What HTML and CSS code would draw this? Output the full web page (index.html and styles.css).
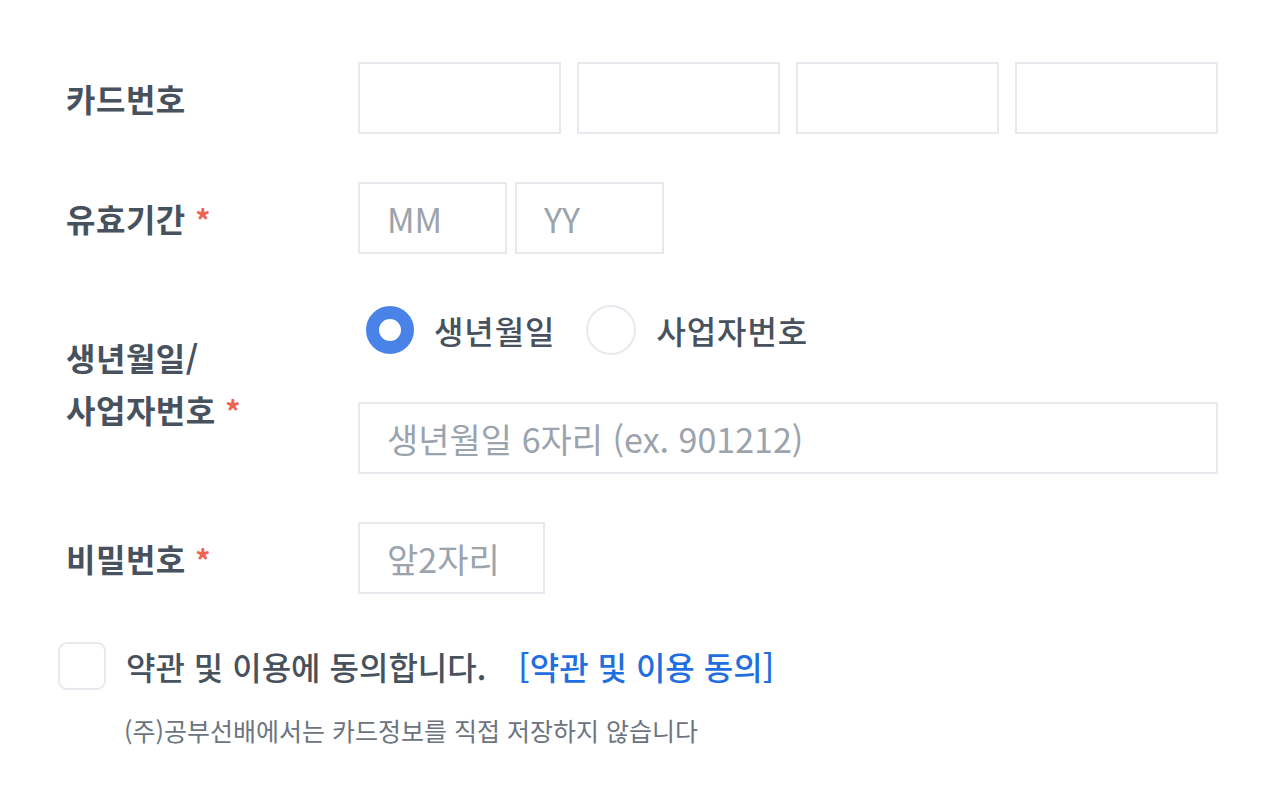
FILE: index.html
```html
<!DOCTYPE html>
<html lang="ko">
<head>
<meta charset="utf-8">
<title>카드 결제</title>
<link rel="stylesheet" href="styles.css">
</head>
<body>
<form class="form">
  <div class="row">
    <div class="label">카드번호</div>
    <div class="field card-fields">
      <input class="box" type="text">
      <input class="box" type="text">
      <input class="box" type="text">
      <input class="box" type="text">
    </div>
  </div>

  <div class="row">
    <div class="label">유효기간 <span class="req">*</span></div>
    <div class="field exp-fields">
      <input class="box exp" type="text" placeholder="MM">
      <input class="box exp" type="text" placeholder="YY">
    </div>
  </div>

  <div class="row row-id">
    <div class="label label-two">생년월일/<br>사업자번호 <span class="req">*</span></div>
    <div class="field id-fields">
      <div class="radios">
        <label class="radio"><span class="dot on"></span>생년월일</label>
        <label class="radio"><span class="dot"></span>사업자번호</label>
      </div>
      <input class="box wide" type="text" placeholder="생년월일 6자리 (ex. 901212)">
    </div>
  </div>

  <div class="row">
    <div class="label">비밀번호 <span class="req">*</span></div>
    <div class="field">
      <input class="box pw" type="text" placeholder="앞2자리">
    </div>
  </div>

  <div class="agree">
    <span class="check"></span>
    <span class="agree-text">약관 및 이용에 동의합니다.</span>
    <a class="terms" href="#">[약관 및 이용 동의]</a>
  </div>
  <p class="note">(주)공부선배에서는 카드정보를 직접 저장하지 않습니다</p>
</form>
</body>
</html>
```

FILE: styles.css
```css
* { box-sizing: border-box; }
html, body {
  margin: 0;
  padding: 0;
  background: #ffffff;
}
body {
  font-family: "Noto Sans CJK KR", "Noto Sans", sans-serif;
  color: #47525e;
}
.form {
  width: 1160px;
  margin: 0 0 0 58px;
  padding-top: 62px;
  display: flex;
  flex-direction: column;
}
.row {
  display: grid;
  grid-template-columns: 300px 1fr;
  align-items: center;
  margin-bottom: 48px;
}
.row-id {
  margin-top: 4px;
}
.label {
  padding-left: 8px;
  font-size: 32px;
  font-weight: 700;
  letter-spacing: 0.5px;
  line-height: 52px;
  color: #47525e;
}
.label-two {
  margin-bottom: 14px;
}
.req {
  color: #ef6351;
  font-size: 30px;
  font-weight: 700;
  margin-left: 0;
}
.field {
  display: flex;
}
.card-fields {
  gap: 16px;
}
.exp-fields {
  gap: 8px;
}
.box {
  height: 72px;
  border: 2px solid #e6e9ee;
  background: #fff;
  padding: 0 27px;
  font-family: "Noto Sans CJK KR", "Noto Sans", sans-serif;
  font-size: 34px;
  letter-spacing: 0;
  color: #47525e;
  outline: none;
  border-radius: 0;
  margin: 0;
}
.box::placeholder {
  color: #9ba3ad;
}
.card-fields .box {
  width: 203px;
}
.box.exp {
  width: 149px;
}
.box.wide {
  width: 860px;
}
.box.pw {
  width: 187px;
}
.id-fields {
  flex-direction: column;
  gap: 48px;
}
.radios {
  display: flex;
  align-items: center;
  height: 48px;
  padding-left: 8px;
  gap: 31px;
}
.radio {
  display: flex;
  align-items: center;
  gap: 20px;
  font-size: 32px;
  font-weight: 500;
  letter-spacing: 0.9px;
  color: #47525e;
}
.dot {
  width: 50px;
  height: 50px;
  border-radius: 50%;
  border: 2px solid #e6e9ee;
  background: #fff;
}
.dot.on {
  width: 48px;
  height: 48px;
  border: 13px solid #4a83e8;
}
.agree {
  display: flex;
  align-items: center;
  height: 48px;
}
.check {
  width: 48px;
  height: 48px;
  border: 2px solid #e6e9ee;
  border-radius: 9px;
  margin-right: 20px;
  flex-shrink: 0;
}
.agree-text {
  font-size: 32px;
  font-weight: 500;
  letter-spacing: 0;
  color: #47525e;
}
.terms {
  margin-left: 32px;
  font-size: 32px;
  font-weight: 500;
  letter-spacing: 0;
  color: #1f6fe0;
  text-decoration: none;
}
.note {
  margin: 22px 0 0 66px;
  font-size: 25px;
  letter-spacing: 0;
  color: #6b7480;
}
```
